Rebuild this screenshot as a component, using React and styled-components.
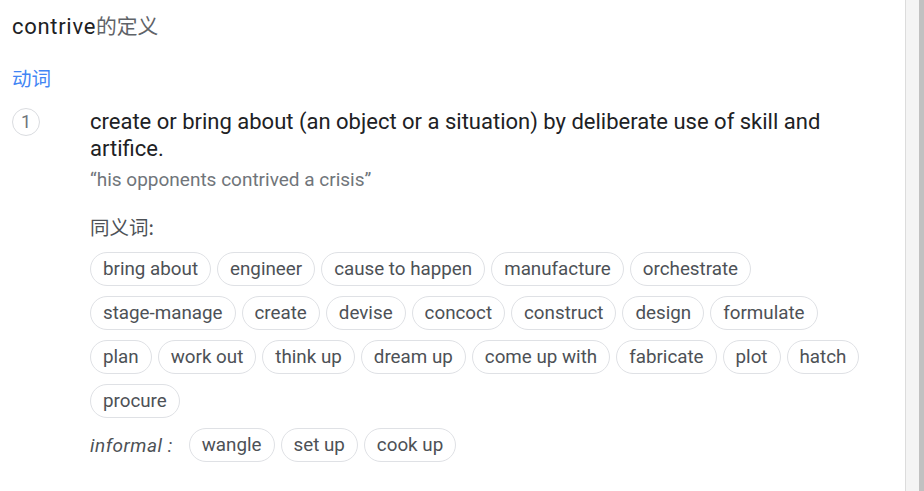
import React from 'react';
import styled, { createGlobalStyle } from 'styled-components';

const GlobalStyle = createGlobalStyle`
  html, body {
    margin: 0;
    padding: 0;
    background: #fff;
  }
  body {
    font-family: Roboto, "Noto Sans CJK SC", Arial, sans-serif;
  }
`;

const Page = styled.div`
  display: flex;
  width: 924px;
  height: 491px;
  overflow: hidden;
`;

const Main = styled.div`
  flex: 1;
  padding: 10px 33px 0 12px;
  border-right: 1px solid #dcdcdc;
`;

const Rail = styled.div`
  display: flex;
  width: 18px;
  background: #f4f4f4;
`;

const Thumb = styled.div`
  margin-left: auto;
  width: 5px;
  background: #c1c1c1;
`;

const Title = styled.h1`
  margin: 0;
  font-size: 22px;
  font-weight: 400;
  line-height: 30px;
  letter-spacing: 0.7px;
  color: #202124;
`;

const TitleCjk = styled.span`
  font-family: "Noto Sans CJK SC", sans-serif;
  font-size: 20.8px;
  letter-spacing: 0;
  color: #5f6368;
`;

const Pos = styled.div`
  margin-top: 23px;
  font-family: "Noto Sans CJK SC", sans-serif;
  font-size: 19.5px;
  line-height: 26px;
  color: #4285f4;
`;

const Sense = styled.div`
  display: grid;
  grid-template-columns: 78px 1fr;
  margin-top: 17px;
`;

const Num = styled.div`
  width: 26px;
  height: 26px;
  margin-top: -0.5px;
  border: 1px solid #dadce0;
  border-radius: 50%;
  display: flex;
  align-items: center;
  justify-content: center;
  font-size: 18px;
  color: #70757a;
`;

const Gloss = styled.div`
  font-size: 22px;
  line-height: 27px;
  color: #202124;
`;

const Example = styled.div`
  margin-top: 6px;
  font-size: 19px;
  line-height: 24px;
  color: #70757a;
`;

const Label = styled.div`
  margin-top: 22px;
  font-family: "Noto Sans CJK SC", sans-serif;
  font-size: 19.5px;
  line-height: 26px;
  color: #4d5156;
`;

const ChipRow = styled.div`
  display: flex;
  flex-wrap: wrap;
  align-items: center;
  gap: 10px 6px;
  margin-top: ${(p) => p.$top || 0}px;
`;

const Chip = styled.span`
  display: inline-flex;
  align-items: center;
  height: 34px;
  box-sizing: border-box;
  padding: 0 12px;
  border: 1px solid #dfe1e5;
  border-radius: 17px;
  font-size: 18.8px;
  color: #4d5156;
  white-space: nowrap;
`;

const Register = styled.span`
  margin-right: 10px;
  font-style: italic;
  font-size: 19px;
  letter-spacing: 0.5px;
  color: #4d5156;
`;

const synonyms = [
  'bring about', 'engineer', 'cause to happen', 'manufacture', 'orchestrate',
  'stage-manage', 'create', 'devise', 'concoct', 'construct', 'design', 'formulate',
  'plan', 'work out', 'think up', 'dream up', 'come up with', 'fabricate', 'plot', 'hatch',
  'procure',
];

const informal = ['wangle', 'set up', 'cook up'];

const App = () => {
  return (
    <Page>
      <GlobalStyle />
      <Main>
        <Title>
          contrive<TitleCjk>的定义</TitleCjk>
        </Title>
        <Pos>动词</Pos>
        <Sense>
          <Num>1</Num>
          <div>
            <Gloss>
              create or bring about (an object or a situation) by deliberate use of skill and artifice.
            </Gloss>
            <Example>“his opponents contrived a crisis”</Example>
            <Label>同义词:</Label>
            <ChipRow $top={12}>
              {synonyms.map((s) => (
                <Chip key={s}>{s}</Chip>
              ))}
            </ChipRow>
            <ChipRow $top={10}>
              <Register>informal :</Register>
              {informal.map((s) => (
                <Chip key={s}>{s}</Chip>
              ))}
            </ChipRow>
          </div>
        </Sense>
      </Main>
      <Rail>
        <Thumb />
      </Rail>
    </Page>
  );
};

export default App;
